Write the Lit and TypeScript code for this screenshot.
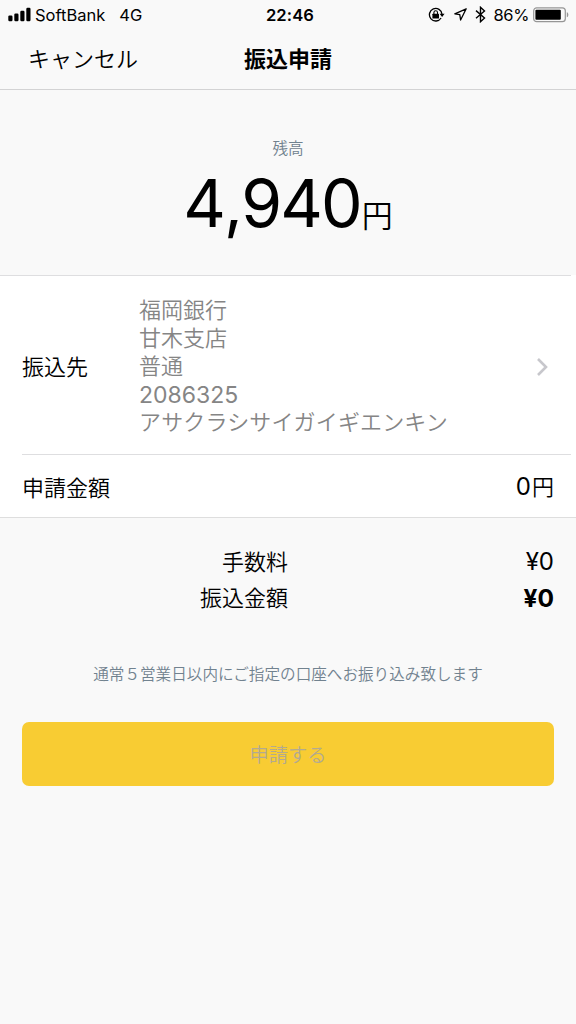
import { LitElement, html, css } from "lit";
import { customElement } from "lit/decorators.js";

@customElement("status-bar")
class StatusBar extends LitElement {
  static styles = css`
    :host { display: grid; grid-template-columns: 1fr auto 1fr; height: 29px; align-items: center; padding: 0 7px 0 8px; box-sizing: border-box; font-size: 16.5px; color: #000; }
    .side { display: flex; align-items: center; height: 29px; }
    .right { justify-content: flex-end; }
    .carrier { margin-left: 4px; }
    .network { margin-left: 14px; }
    .time { font-weight: 600; font-size: 16.6px; letter-spacing: 0.1px; padding-left: 3px; }
    .percent { margin: 0 4px 0 8px; letter-spacing: -0.4px; }
    svg { display: block; flex: none; }
    .arrow { margin-left: 9px; }
    .bt { margin-left: 8px; }
  `;
  render() {
    return html`
      <div class="side">
        <svg width="23" height="15" viewBox="0 0 23 15">
          <rect x="0.3" y="8.5" width="4.2" height="5.7" rx="1.2" />
          <rect x="6.3" y="6.5" width="4.2" height="7.7" rx="1.2" />
          <rect x="12.3" y="3.7" width="4.2" height="10.5" rx="1.2" />
          <rect x="18.3" y="0.7" width="4.2" height="13.5" rx="1.2" />
        </svg>
        <span class="carrier">SoftBank</span><span class="network">4G</span>
      </div>
      <span class="time">22:46</span>
      <div class="side right">
        <svg width="17" height="16" viewBox="0 0 17 16">
          <path d="M14 7.2A6.3 6.3 0 1 0 13.1 11" fill="none" stroke="#000" stroke-width="1.3" />
          <path d="M11.6 6.7h5l-2.5 3.2z" />
          <rect x="4.4" y="6.8" width="6.6" height="4.7" rx=".5" />
          <path d="M5.9 7.3V5.6a1.8 1.8 0 0 1 3.6 0v1.7" fill="none" stroke="#000" stroke-width="1.1" />
        </svg>
        <svg class="arrow" width="13" height="13" viewBox="0 0 13 13">
          <path d="M12.2.8.8 5.8l5 .8.8 5.4z" fill="none" stroke="#000" stroke-width="1.3" stroke-linejoin="round" />
        </svg>
        <svg class="bt" width="11" height="17" viewBox="0 0 11 17">
          <path d="M1 4.6 9.5 12 5.5 15.7V1.3L9.5 5 1 12.3" fill="none" stroke="#000" stroke-width="1.4" />
        </svg>
        <span class="percent">86%</span>
        <svg width="36" height="16" viewBox="0 0 36 16">
          <rect x=".7" y=".8" width="31.6" height="13.9" rx="3" fill="none" stroke="#969696" stroke-width="1.2" />
          <rect x="2.4" y="2.7" width="25.4" height="10.1" rx="1" />
          <path d="M33.8 5.2c2.1.6 2.1 4.4 0 5z" fill="#969696" />
        </svg>
      </div>
    `;
  }
}

@customElement("app-root")
class AppRoot extends LitElement {
  static styles = css`
    :host { display: block; min-height: 1024px; background: #f9f9f9; color: #000; font-family: Inter, "Noto Sans CJK JP", sans-serif; font-size: 22px; line-height: 28px; white-space: nowrap; }
    * { box-sizing: border-box; }
    .jp { font-family: "Noto Sans CJK JP", sans-serif; font-weight: 350; }
    .nav { display: grid; grid-template-columns: 1fr auto 1fr; align-items: center; height: 61px; padding: 0 28px 4px; border-bottom: 1px solid #d3d3d4; }
    .title { font-family: "Noto Sans CJK JP", sans-serif; font-weight: 700; }
    .balance { display: flex; flex-direction: column; align-items: center; height: 185px; padding-top: 43px; }
    .caption { font-size: 15.6px; color: #71828f; }
    .amount { display: flex; align-items: baseline; font-size: 66px; line-height: 80px; margin-top: 2px; letter-spacing: -1.9px; font-kerning: none; font-feature-settings: "calt" 0; }
    .amount .jp { font-size: 31px; line-height: 40px; letter-spacing: 0; margin-left: 1px; }
    .card { background: #fff; border-bottom: 1px solid #dedede; }
    .card::before { content: ""; display: block; width: 571px; height: 1px; background: #dedee0; }
    .row { display: flex; align-items: center; margin-left: 22px; padding-right: 22px; }
    .account { height: 178px; }
    .label { width: 117px; }
    .detail { flex: 1; color: #858585; padding-bottom: 2px; }
    .number { font-size: 23px; line-height: 30px; padding-top: 2px; height: 28px; }
    .kana { letter-spacing: 0.15px; }
    .chevron { margin: 3px 1px 0 0; }
    .divider { height: 1px; margin: 0 5px 0 22px; background: #dedee0; }
    .request { height: 62px; justify-content: space-between; }
    .value { font-size: 24px; }
    .value .jp { font-size: 22px; margin-left: 1px; }
    .totals { display: grid; grid-template-columns: 288px 1fr; row-gap: 8px; padding: 28px 22px 2px 0; text-align: right; }
    .totals .value { padding-top: 2px; height: 28px; }
    .totals .strong { font-weight: 700; font-size: 24.5px; }
    .note { margin-top: 47px; text-align: center; }
    .submit { display: flex; align-items: center; justify-content: center; width: 532px; height: 64px; margin: 35px auto 0; border: 0; border-radius: 7px; background: #f8cc33; color: #b3aa90; font-size: 19.3px; padding: 0; }
  `;
  render() {
    return html`
      <status-bar></status-bar>
      <header class="nav"><span class="jp">キャンセル</span><span class="title">振込申請</span></header>
      <section class="balance">
        <div class="caption jp">残高</div>
        <div class="amount">4,940<span class="jp">円</span></div>
      </section>
      <section class="card">
        <div class="row account">
          <div class="label jp">振込先</div>
          <div class="detail">
            <div class="jp">福岡銀行</div>
            <div class="jp">甘木支店</div>
            <div class="jp">普通</div>
            <div class="number">2086325</div>
            <div class="jp kana">アサクラシサイガイギエンキン</div>
          </div>
          <svg class="chevron" width="18" height="20" viewBox="0 0 18 20">
            <path d="m3 2 8 8-8 8" fill="none" stroke="#c7c7cc" stroke-width="2.6" />
          </svg>
        </div>
        <div class="divider"></div>
        <div class="row request">
          <span class="jp">申請金額</span>
          <span class="value">0<span class="jp">円</span></span>
        </div>
      </section>
      <section class="totals">
        <span class="jp">手数料</span><span class="value">¥0</span>
        <span class="jp">振込金額</span><span class="value strong">¥0</span>
      </section>
      <div class="note caption jp">通常５営業日以内にご指定の口座へお振り込み致します</div>
      <button class="submit jp" disabled>申請する</button>
    `;
  }
}
